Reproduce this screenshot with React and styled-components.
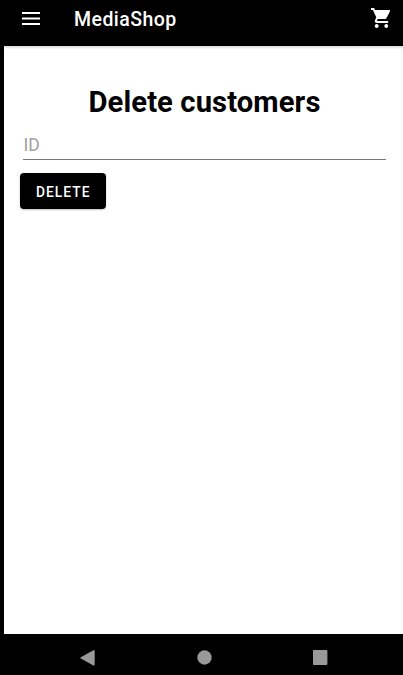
import React from "react";
import styled, { createGlobalStyle } from "styled-components";

const GlobalStyle = createGlobalStyle`
  * { box-sizing: border-box; }
  body { margin: 0; background: #000; font-family: Roboto, sans-serif; }
`;

const Screen = styled.div`
  display: flex;
  flex-direction: column;
  width: 403px;
  height: 675px;
  overflow: hidden;
  background: #000;
`;

const AppBar = styled.header`
  display: flex;
  align-items: flex-start;
  height: 46px;
  padding: 8px 12px 0 22px;
  color: #fff;
`;

const IconButton = styled.button`
  display: block;
  padding: 0;
  border: 0;
  background: none;
  color: inherit;
  margin-top: ${(p) => p.$top || 0}px;
  svg { display: block; }
`;

const AppTitle = styled.div`
  flex: 1;
  margin-left: 34px;
  font-size: 19.5px;
  font-weight: 500;
  line-height: 24px;
  letter-spacing: 0.45px;
`;

const Page = styled.main`
  flex: 1;
  margin-left: 4px;
  padding: 38px 17px 0 16px;
  background: #fff;
  box-shadow: inset 0 3px 3px -2px rgba(0, 0, 0, 0.2);
`;

const Heading = styled.h1`
  margin: 0 0 0 3px;
  font-size: 29.2px;
  font-weight: 700;
  line-height: 37px;
  letter-spacing: 0.1px;
  text-align: center;
  color: #000;
`;

const TextField = styled.input`
  display: block;
  width: 363px;
  height: 30px;
  margin: 9px 0 0 3px;
  padding: 1px 0 0 0.5px;
  border: 0;
  border-bottom: 1px solid #777;
  border-radius: 0;
  outline: 0;
  background: transparent;
  font: 400 17.5px Roboto, sans-serif;
  &::placeholder { color: #a0a0a0; opacity: 1; }
`;

const DeleteButton = styled.button`
  display: block;
  width: 85.5px;
  height: 36px;
  margin-top: 13px;
  padding: 1px 0 0 1px;
  border: 0;
  border-radius: 4px;
  background: #000;
  color: #fff;
  font: 500 13.8px Roboto, sans-serif;
  letter-spacing: 1.05px;
  box-shadow: 0 1px 2px rgba(0, 0, 0, 0.25);
`;

const NavBar = styled.nav`
  display: flex;
  align-items: flex-start;
  justify-content: space-between;
  height: 41px;
  padding: 16px 75px 0 80px;
  color: #999;
`;

export default function App() {
  return (
    <Screen>
      <GlobalStyle />
      <AppBar>
        <IconButton $top={4} aria-label="Menu">
          <svg width="18" height="13" viewBox="0 0 18 13" fill="currentColor">
            <path d="M0 0h18v2H0zM0 5.4h18v2H0zM0 11h18v2H0z" />
          </svg>
        </IconButton>
        <AppTitle>MediaShop</AppTitle>
        <IconButton aria-label="Cart">
          <svg width="20" height="20" viewBox="1 2 21 20" preserveAspectRatio="none" fill="currentColor">
            <path d="M7 18c-1.1 0-1.99.9-1.99 2S5.9 22 7 22s2-.9 2-2-.9-2-2-2zM1 2v2h2l3.6 7.59-1.35 2.45c-.16.28-.25.61-.25.96 0 1.1.9 2 2 2h12v-2H7.42c-.14 0-.25-.11-.25-.25l.03-.12.9-1.63h7.45c.75 0 1.41-.41 1.75-1.03l3.58-6.49c.08-.14.12-.31.12-.48 0-.55-.45-1-1-1H5.21l-.94-2H1zm16 16c-1.1 0-1.99.9-1.99 2s.89 2 1.99 2 2-.9 2-2-.9-2-2-2z" />
          </svg>
        </IconButton>
      </AppBar>
      <Page>
        <Heading>Delete customers</Heading>
        <TextField placeholder="ID" />
        <DeleteButton>DELETE</DeleteButton>
      </Page>
      <NavBar>
        <IconButton aria-label="Back">
          <svg width="15" height="16" viewBox="0 0 15 16" fill="currentColor">
            <path d="M.8 7.2 13.4.2Q14.7-.2 14.7 1v13.6q0 1.3-1.3.8L.8 8.6Q0 7.9.8 7.2z" />
          </svg>
        </IconButton>
        <IconButton aria-label="Home">
          <svg width="15" height="15" viewBox="0 0 15 15" fill="currentColor">
            <circle cx="7.5" cy="7.5" r="7.2" />
          </svg>
        </IconButton>
        <IconButton aria-label="Recents">
          <svg width="15" height="15" viewBox="0.4 0 15 15" fill="currentColor">
            <rect x="0" y="0" width="14.8" height="15" rx="1.2" />
          </svg>
        </IconButton>
      </NavBar>
    </Screen>
  );
}
